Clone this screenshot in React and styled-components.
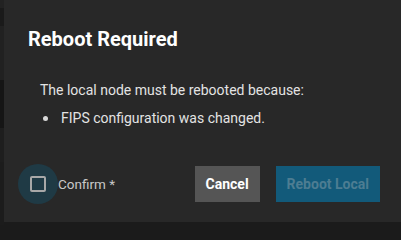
import React, { useState } from "react";
import styled, { createGlobalStyle } from "styled-components";

const GlobalStyle = createGlobalStyle`
  html, body {
    margin: 0;
    padding: 0;
    background: #1b1b1b;
    overflow: hidden;
  }
  * {
    box-sizing: border-box;
  }
`;

const backdrop = [
  { h: 8, c: "#222222" },
  { h: 18, c: "#1a1a1a" },
  { h: 54, c: "#212121" },
  { h: 48, c: "#151515" },
  { h: 34, c: "#1e1e1e" },
  { h: 63, c: "#1c1c1c" },
];

const reasons = ["FIPS configuration was changed."];

function RebootDialog() {
  const [confirmed, setConfirmed] = useState(false);

  return (
    <Page>
      <Backdrop>
        {backdrop.map((b, i) => (
          <Strip key={i} $h={b.h} $c={b.c} />
        ))}
      </Backdrop>
      <Dialog>
        <Title>Reboot Required</Title>
        <Body>
          <Text>The local node must be rebooted because:</Text>
          <Reasons>
            {reasons.map((r) => (
              <Reason key={r}>{r}</Reason>
            ))}
          </Reasons>
        </Body>
        <Actions>
          <CheckLabel>
            <Ripple>
              <Box $checked={confirmed} />
              <HiddenInput
                type="checkbox"
                checked={confirmed}
                onChange={(e) => setConfirmed(e.target.checked)}
              />
            </Ripple>
            Confirm *
          </CheckLabel>
          <Spacer />
          <Button $variant="default">Cancel</Button>
          <Button $variant="primary" disabled={!confirmed}>
            Reboot Local
          </Button>
        </Actions>
      </Dialog>
    </Page>
  );
}

const Page = styled.div`
  width: 401px;
  height: 225px;
  display: flex;
  align-items: flex-start;
  background: #1b1b1b;
  font-family: Roboto, "Noto Sans", sans-serif;
`;

const Backdrop = styled.div`
  width: 4px;
  height: 225px;
  display: flex;
  flex-direction: column;
`;

const Strip = styled.div`
  height: ${(p) => p.$h}px;
  background: ${(p) => p.$c};
`;

const Dialog = styled.div`
  flex: 1;
  height: 222px;
  background: #282828;
  padding: 27px 21px 18px 24px;
  display: flex;
  flex-direction: column;
`;

const Title = styled.h2`
  margin: 0;
  font-size: 20px;
  line-height: 24px;
  font-weight: 700;
  color: #ffffff;
`;

const Body = styled.div`
  margin-top: 29px;
  color: #e3e3e3;
  font-size: 14px;
  line-height: 20px;
  padding-left: 12px;
`;

const Text = styled.p`
  margin: 0;
`;

const Reasons = styled.ul`
  margin: 8px 0 0;
  padding: 0;
  list-style: none;
`;

const Reason = styled.li`
  display: flex;
  align-items: center;

  &::before {
    content: "";
    width: 5px;
    height: 5px;
    border-radius: 50%;
    background: #d8d8d8;
    margin: 0 13px 0 3px;
  }
`;

const Actions = styled.div`
  margin-top: auto;
  display: flex;
  align-items: center;
  gap: 16px;
`;

const CheckLabel = styled.label`
  display: flex;
  align-items: center;
  color: #c8c8c8;
  font-size: 13.5px;
  cursor: pointer;
  margin-left: -10px;
`;

const Ripple = styled.span`
  position: relative;
  width: 40px;
  height: 40px;
  border-radius: 50%;
  background: #1f3a45;
  display: flex;
  align-items: center;
  justify-content: center;
`;

const Box = styled.span`
  width: 16px;
  height: 16px;
  border: 2px solid #a8a8a8;
  border-radius: 2px;
  background: ${(p) => (p.$checked ? "#a8a8a8" : "transparent")};
`;

const HiddenInput = styled.input`
  position: absolute;
  inset: 0;
  opacity: 0;
  margin: 0;
  cursor: pointer;
`;

const Spacer = styled.div`
  flex: 1;
`;

const Button = styled.button`
  height: 36px;
  padding: 0 11px;
  border: none;
  border-radius: 0;
  font-family: inherit;
  font-size: 14px;
  font-weight: 700;
  cursor: pointer;
  background: ${(p) => (p.$variant === "primary" ? "#125a7a" : "#555555")};
  color: #ffffff;

  &:disabled {
    color: #4d7d92;
    cursor: default;
  }
`;

export default function App() {
  return (
    <>
      <GlobalStyle />
      <RebootDialog />
    </>
  );
}
